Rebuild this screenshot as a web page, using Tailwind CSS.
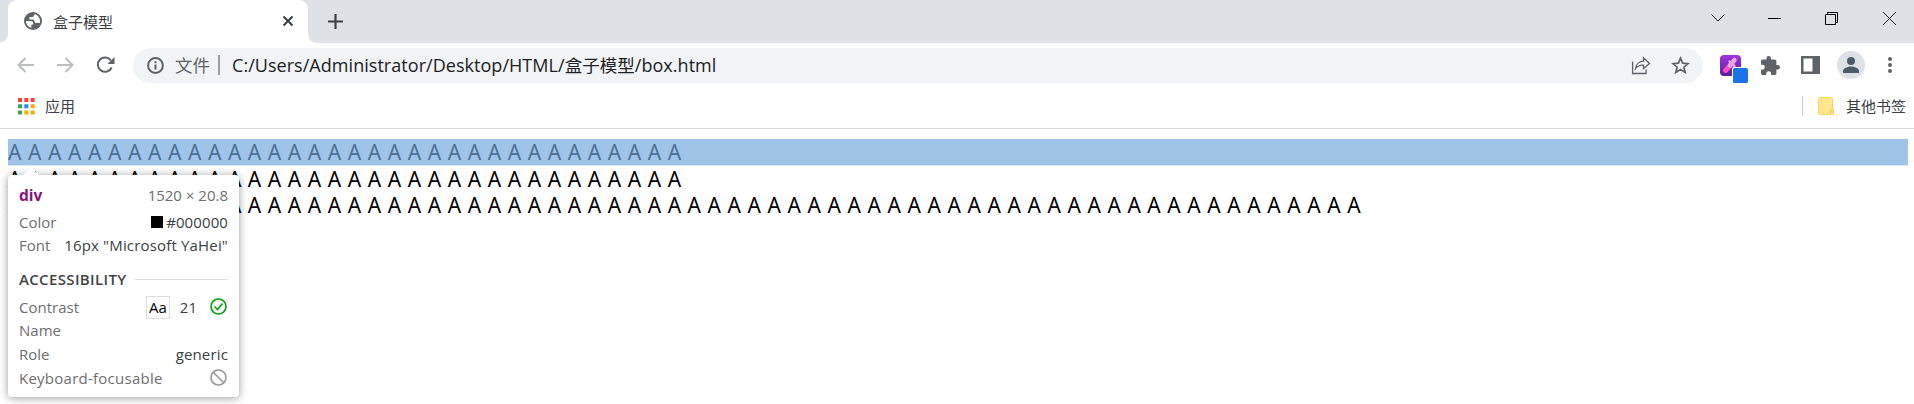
<!DOCTYPE html>
<html lang="zh">
<head>
<meta charset="utf-8">
<title>盒子模型</title>
<script src="https://cdn.jsdelivr.net/npm/@tailwindcss/browser@4"></script>
</head>
<body class="w-[1914px] h-[404px] overflow-hidden bg-white font-['Open_Sans','Noto_Sans_CJK_SC',sans-serif]">
<header class="flex flex-col h-[129px] border-b border-[#d8dadd] text-[#3c4043]">
  <div class="flex h-[43px] bg-[#dee1e6]">
    <svg class="w-[320px] h-[43px] shrink-0 -mr-[320px]" viewBox="0 0 320 43" fill="#fff"><path d="M0 43V42.500Q8 42 8 33V10Q8 0 18 0H298Q308 0 308 10V33Q308 43 318 43Z"/></svg>
    <div class="relative flex items-center w-[308px] pl-6 pr-3.5 pb-px">
      <svg class="size-[18px]" viewBox="0 0 18 18"><circle cx="9" cy="9" r="9" fill="#5f6368"/><path d="M11.300 2.200C10.500 2.200 9.800 2.800 9.800 3.800C9.800 4.600 9 5 7.800 5H6.300C5.600 5 5.300 5.600 5.300 6.200L5.600 7.500H8.600C10 7.500 10.300 8.300 10.500 9.500C10.700 10.600 11.500 11 12.600 11H15.600C16 10.300 16.100 9.600 16 8.500C15.800 5.700 13.900 3.200 11.300 2.200Z M2 9H6.500C8.500 9 9.300 10 9.300 11.300C9.300 12.500 8.500 12.800 7.300 12.800V15.800C4.300 15.200 2 12.500 2 9Z" fill="#fff"/></svg>
      <span class="ml-[11px] mt-0.5 text-[15px] leading-5">盒子模型</span>
      <svg class="ml-auto size-3" viewBox="0 0 12 12" stroke="#3c4043" stroke-width="2"><path d="M1.500 1.500l9 9m0-9l-9 9"/></svg>
    </div>
    <svg class="ml-5 mt-3.5 size-[15px]" viewBox="0 0 15 15" stroke="#3c4043" stroke-width="2.200"><path d="M7.500 0v15M0 7.500h15"/></svg>
    <div class="ml-auto flex items-center pr-[18px] pb-[7px]">
      <svg class="w-[14px] h-2" viewBox="0 0 14 8" fill="none" stroke="#222"><path d="M.5 .5L7 7L13.500 .5"/></svg>
      <div class="ml-[43px] w-[13px] h-px bg-black"></div>
      <svg class="ml-11 size-[13px]" viewBox="0 0 13 13" fill="none" stroke="#000"><path d="M.5 2.500h10v10h-10zM2.500 2.500v-2h10v10h-2"/></svg>
      <svg class="ml-[45px] size-[13px]" viewBox="0 0 13 13" stroke="#222"><path d="M0 0l13 13M13 0L0 13"/></svg>
    </div>
  </div>
  <div class="flex items-center h-[44px] pl-[17px] mt-0">
    <svg class="w-[17px] h-4" viewBox="0 0 17 16" fill="none" stroke="#bbbdbf" stroke-width="2"><path d="M8.500 1L1.500 8l7 7M1.500 8H17"/></svg>
    <svg class="ml-[23px] w-[17px] h-4" viewBox="0 0 17 16" fill="none" stroke="#bbbdbf" stroke-width="2"><path d="M8.500 1l7 7-7 7M15.500 8H0"/></svg>
    <svg class="ml-[22px] w-[19px] h-[18px]" viewBox="0 0 19 18" fill="none"><path d="M15 4.500A7.200 7.200 0 1 0 15.700 11.500" stroke="#5f6368" stroke-width="2"/><path d="M18.500 1v7h-7z" fill="#5f6368"/></svg>
    <div class="ml-[18px] flex items-center w-[1570px] h-[35px] rounded-full bg-[#f1f3f4] pl-3.5 pr-[13px]">
      <svg class="size-[17px]" viewBox="0 0 17 17" fill="none" stroke="#5f6368" stroke-width="2"><circle cx="8.500" cy="8.500" r="7.400"/><path d="M8.500 7.500v5M8.500 4.300v2"/></svg>
      <span class="ml-[11px] text-[17.5px] text-[#5f6368]">文件</span>
      <span class="ml-2 w-0.5 h-5 bg-[#9a9da0]"></span>
      <span class="ml-3 text-[18px] tracking-[0.04px] text-[#202124] whitespace-nowrap">C:/Users/Administrator/Desktop/HTML/<span class="text-[17.5px]">盒子模型</span>/box.html</span>
      <svg class="ml-auto w-5 h-[19px]" viewBox="0 0 20 19" fill="none" stroke="#5f6368" stroke-width="1.300"><path d="M1.600 5.500v12h13.500v-4M4.500 12.500C5 8 8.500 5.300 12.500 5.200V1.800L18.500 7.500L12.500 12.500V9.200C9 9 6.500 10 4.500 12.500Z"/></svg>
      <svg class="ml-5 size-[19px]" viewBox="0 0 19 19" fill="none" stroke="#5f6368" stroke-width="1.700"><path d="M9.500 2.200l2.100 5 5.400.5-4.100 3.500 1.300 5.300-4.700-2.900-4.700 2.900 1.300-5.300L2 7.700l5.400-.5z"/></svg>
    </div>
    <svg class="ml-[17px] w-7 h-7 mt-2" viewBox="0 0 28 28"><defs><linearGradient id="g" x1="0" y1="0" x2="0" y2="1"><stop stop-color="#a133e0"/><stop offset="1" stop-color="#54209a"/></linearGradient></defs><rect width="21" height="21" rx="4" fill="url(#g)"/><path d="M5.500 15.500L11 9.500" stroke="#ff4fc0" stroke-width="5" stroke-linecap="round"/><path d="M10 10.500L14.500 5" stroke="#e9a6e6" stroke-width="4.500" stroke-linecap="round"/><path d="M9.500 6.500l5 4.500" stroke="#e9a6e6" stroke-width="2.500" stroke-linecap="round"/><rect x="12" y="12" width="16" height="16" rx="2" fill="#fff"/><rect x="13" y="13" width="15" height="15" rx="1.500" fill="#1a73e8"/></svg>
    <svg class="ml-[13px] w-[19px] h-[19px]" viewBox="2 1 21 21" fill="#5f6368"><path d="M20.500 11H19V7c0-1.100-.9-2-2-2h-4V3.500a2.500 2.500 0 0 0-5 0V5H4c-1.100 0-2 .9-2 2v3.800h1.500a2.700 2.700 0 0 1 0 5.400H2V20c0 1.100.9 2 2 2h3.800v-1.500a2.700 2.700 0 0 1 5.400 0V22H17c1.100 0 2-.9 2-2v-4h1.500a2.500 2.500 0 0 0 0-5z"/></svg>
    <svg class="ml-[21px] w-[19px] h-[18px]" viewBox="0 0 19 18"><path fill="#5f6368" fill-rule="evenodd" d="M0 0h19v18H0zM2.500 2.500v13h9v-13z"/></svg>
    <svg class="ml-[17px] size-7" viewBox="0 0 28 28"><circle cx="14" cy="14" r="14" fill="#dee1e6"/><circle cx="14" cy="10" r="4" fill="#4d5a6e"/><path fill="#4d5a6e" d="M6 22v-2c0-3 5-4.500 8-4.500s8 1.500 8 4.500v2z"/></svg>
    <svg class="ml-[23px] w-1 h-4" viewBox="0 0 4 16" fill="#5f6368"><circle cx="2" cy="2" r="2"/><circle cx="2" cy="8" r="2"/><circle cx="2" cy="14" r="2"/></svg>
  </div>
  <div class="flex items-center h-[41px] pl-[18px] pr-2 pb-[3px]">
    <svg class="size-[17px]" viewBox="0 0 17 17"><path fill="#f44336" d="M0 0h4v4H0zM6.300 0h4v4h-4zM12.600 0h4v4h-4z"/><path fill="#34a853" d="M0 6.300h4v4H0zM0 12.600h4v4H0z"/><path fill="#1e88ff" d="M6.300 6.300h4v4h-4z"/><path fill="#f9ab00" d="M12.600 6.300h4v4h-4zM6.300 12.600h4v4h-4zM12.600 12.600h4v4h-4z"/></svg>
    <span class="ml-2.5 text-[15px]">应用</span>
    <span class="ml-auto w-px h-5 bg-[#c8cacd]"></span>
    <svg class="ml-[15px] w-4 h-[18px]" viewBox="0 0 16 18"><path d="M2 .5h11q1.500 0 1.500 1.500v9.500l1 1V16q0 1.500-1.500 1.500H2Q.5 17.500 .5 16V2Q.5.5 2 .5z" fill="#ffe68f" stroke="#fbd75b"/><path d="M12.500 17v-4l1.500-1.500 1.500 1.500v3.500" fill="#ffe68f" stroke="#f5c93a"/></svg>
    <span class="ml-3 text-[15px]">其他书签</span>
  </div>
</header>
<main class="relative pt-2.5 px-2 pr-1.5 text-[21px] text-black font-['Noto_Sans',sans-serif] whitespace-nowrap">
  <div class="h-[26px] leading-[27px] bg-[#a0c4e8] text-[#4a7095] shadow-[0_1px_0_#d9e7f6] [word-spacing:1.11px]" data-n="34"></div>
  <div class="h-[26px] leading-[28px] [word-spacing:1.11px]" data-n="34"></div>
  <div class="h-[26px] leading-[28px] [word-spacing:1.11px]" data-n="68"></div>
  <section class="absolute left-2 top-[46px] w-[231px] h-[222px] rounded-[4px] bg-white shadow-[0_1px_8px_rgba(0,0,0,0.4)] px-[11px] pt-2 text-[15px] leading-[24px] text-[#6e6e6e] font-['Open_Sans',sans-serif]">
    <svg class="absolute left-[14px] -top-2 w-[18px] h-[9px]" viewBox="0 0 18 9" fill="#fff"><path d="M0 9L9 0l9 9z"/></svg>
    <div class="flex justify-between h-[27px]"><b class="text-[#881280] text-[15.5px]">div</b><span>1520 × 20.8</span></div>
    <div class="flex items-center h-6"><span class="mr-auto">Color</span><i class="size-3 bg-black mr-[3px]"></i><span class="text-[#3c4043] tracking-[0.1px]">#000000</span></div>
    <div class="flex justify-between h-6 -mt-px"><span>Font</span><span class="text-[#3c4043] tracking-[0.17px]">16px "Microsoft YaHei"</span></div>
    <div class="flex items-center h-6 mt-2.5 text-[#444]"><span class="font-semibold tracking-[0.35px]">ACCESSIBILITY</span><i class="ml-[9px] flex-1 h-px bg-[#ddd]"></i></div>
    <div class="flex items-center h-6 mt-1"><span class="mr-auto">Contrast</span><span class="border border-[#ddd] text-black px-0.5 leading-[21px]">Aa</span><span class="ml-[10px] text-[#3c4043]">21</span><svg class="ml-[13px] mr-px size-[17px] -mt-0.5" viewBox="0 0 17 17" fill="none" stroke="#0ca40c" stroke-width="1.700"><circle cx="8.500" cy="8.500" r="7.500"/><path d="M4.500 8.500l3 3 5-6"/></svg></div>
    <div class="h-6 -mt-px">Name</div>
    <div class="flex justify-between h-6"><span>Role</span><span class="text-[#3c4043] tracking-[0.15px]">generic</span></div>
    <div class="flex justify-between items-center h-6"><span class="tracking-[0.25px]">Keyboard-focusable</span><svg class="mr-px size-[17px] -mt-0.5" viewBox="0 0 17 17" fill="none" stroke="#9a9a9a" stroke-width="1.700"><circle cx="8.500" cy="8.500" r="7.500"/><path d="M3.500 3.500l10 10"/></svg></div>
  </section>
</main>
<script>
document.querySelectorAll('[data-n]').forEach(function (row) {
  row.textContent = Array(+row.dataset.n).fill('A').join(' ');
});
</script>
</body>
</html>
